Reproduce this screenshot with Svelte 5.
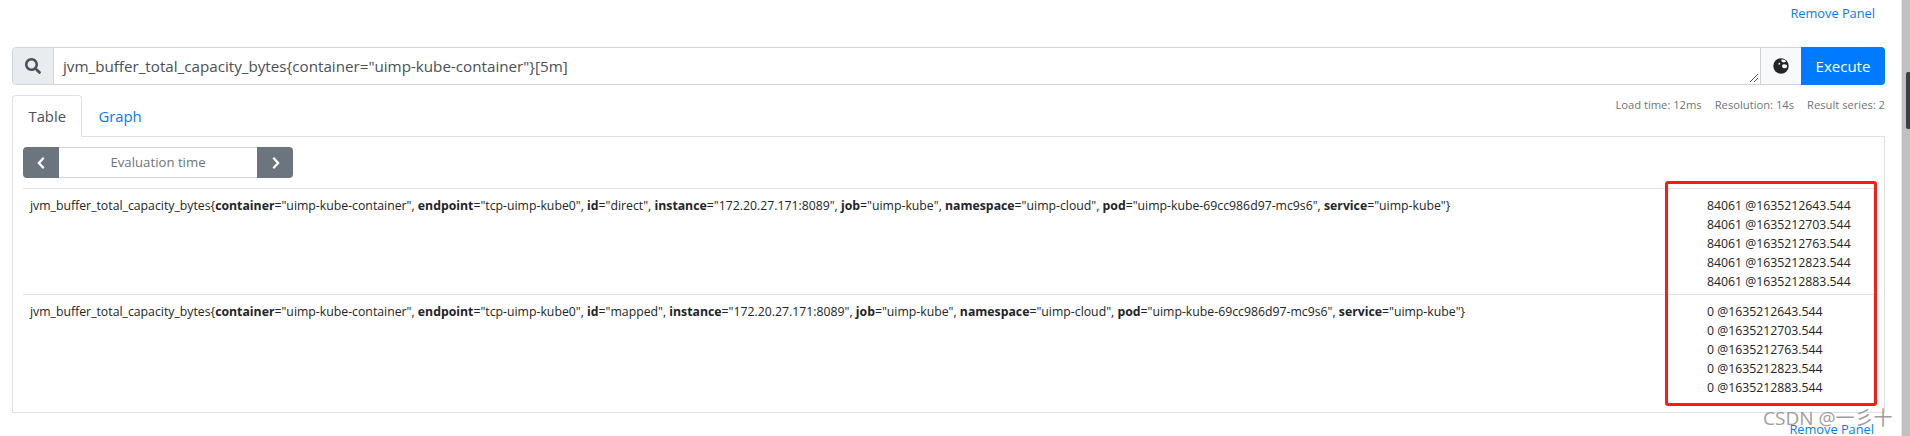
<script>
  const rows = [
    { id: 'direct', v: '84061' },
    { id: 'mapped', v: '0' }
  ];
  const stamps = ['1635212643.544', '1635212703.544', '1635212763.544', '1635212823.544', '1635212883.544'];
</script>

<div class="page">
  <main class="main">
    <div class="top-link"><a href="#r">Remove Panel</a></div>
    <div class="query">
      <div class="prepend">
        <svg viewBox="0 0 512 512" width="16" height="16"><path fill="#495057" d="M505 442.700L405.300 343c-4.500-4.500-10.600-7-17-7H372c27.600-35.300 44-79.700 44-128C416 93.100 322.900 0 208 0S0 93.100 0 208s93.100 208 208 208c48.300 0 92.700-16.400 128-44v16.300c0 6.400 2.500 12.500 7 17l99.700 99.700c9.400 9.400 24.600 9.400 33.900 0l28.300-28.300c9.400-9.400 9.400-24.600.1-34zM208 336c-70.700 0-128-57.200-128-128 0-70.700 57.200-128 128-128 70.700 0 128 57.200 128 128 0 70.700-57.200 128-128 128z"/></svg>
      </div>
      <div class="input">jvm_buffer_total_capacity_bytes{'{'}container="uimp-kube-container"{'}'}[5m]
        <svg class="grip" viewBox="0 0 10 10" width="10" height="10"><path d="M1 9L9 1M5 9L9 5" stroke="#555" stroke-width="1"/></svg>
      </div>
      <div class="globe">
        <svg viewBox="0 0 16 16" width="16" height="16"><circle cx="8" cy="8" r="7.700" fill="#212529"/><path fill="#f8f9fa" d="M8.500 1.600c1.500-.3 3 .2 4 1 .8.700.6 1.400-.3 1.400-.8 0-1.200.6-1.800.3-.7-.4-1.300-.3-1.700-.9-.3-.5-.7-1.500-.2-1.800zM6 5c.8-.4 1.500.2 1.100 1-.3.600-1 .9-1.600.6C5 6.300 5.400 5.300 6 5zM10 6.500c1-.5 2.500-.3 3.300.3.800.6 1.100 1.700.6 2.400-.7.800-2 1.300-3 1.100-1-.2-1.900-1.200-1.900-2.100 0-.6.400-1.400 1-1.700z"/></svg>
      </div>
      <button class="execute">Execute</button>
    </div>

    <div class="tabbar">
      <div class="tabs">
        <span class="tab active">Table</span>
        <a class="tab" href="#g">Graph</a>
      </div>
      <div class="stats">
        <span>Load time: 12ms</span><span>Resolution: 14s</span><span>Result series: 2</span>
      </div>
    </div>

    <section class="panel">
      <div class="evalbar">
        <button class="nav nav-l" aria-label="previous">
          <svg viewBox="0 0 10 16" width="9" height="14"><path d="M7.500 2L2 8l5.500 6" fill="none" stroke="#fff" stroke-width="2.600"/></svg>
        </button>
        <div class="evaltime">Evaluation time</div>
        <button class="nav nav-r" aria-label="next">
          <svg viewBox="0 0 10 16" width="9" height="14"><path d="M2.500 2L8 8l-5.500 6" fill="none" stroke="#fff" stroke-width="2.600"/></svg>
        </button>
      </div>
      <div class="table">
        {#each rows as r}
          <div class="row">
            <div class="metric">jvm_buffer_total_capacity_bytes{'{'}<b>container</b>="uimp-kube-container", <b>endpoint</b>="tcp-uimp-kube0", <b>id</b>="{r.id}", <b>instance</b>="172.20.27.171:8089", <b>job</b>="uimp-kube", <b>namespace</b>="uimp-cloud", <b>pod</b>="uimp-kube-69cc986d97-mc9s6", <b>service</b>="uimp-kube"{'}'}</div>
            <div class="values">
              {#each stamps as s}
                <div>{r.v} @{s}</div>
              {/each}
            </div>
          </div>
        {/each}
      </div>
    </section>
    <div class="bottom-link"><a href="#r2">Remove Panel</a></div>
    <div class="redbox"></div>
    <div class="mark">CSDN @一彡十</div>
  </main>
  <div class="scrollbar"><div class="thumb"></div></div>
</div>

<style>
  :global(body) { margin: 0; background: #fff; overflow: hidden; }
  .page {
    display: flex; height: 436px; overflow: hidden;
    font-family: "Open Sans", "Liberation Sans", sans-serif;
    color: #212529;
  }
  .main { position: relative; flex: 1; padding: 0 16px 0 12px; min-width: 0; }
  a { color: #007bff; text-decoration: none; }
  .scrollbar { width: 8px; background: #c1c1c1; border-left: 1px solid #e6e6e6; position: relative; }
  .thumb { position: absolute; left: 4px; top: 72px; width: 4px; height: 57px; background: #3d3f48; border-radius: 2px 0 0 2px; }
  .top-link { height: 47px; box-sizing: border-box; padding-top: 4px; text-align: right; padding-right: 10px; font-size: 12.800px; line-height: 19px; }
  .query { display: flex; height: 38px; box-sizing: border-box; border: 1px solid #ced4da; border-radius: 4px; }
  .prepend { width: 40px; background: #e9ecef; border-right: 1px solid #ced4da; display: flex; align-items: center; justify-content: center; border-radius: 4px 0 0 4px; }
  .input { flex: 1; position: relative; padding-left: 9px; line-height: 37px; color: #495057; font-size: 15.200px; }
  .grip { position: absolute; right: 1px; bottom: 1px; }
  .globe { width: 40px; background: #f8f9fa; border-left: 1px solid #ced4da; display: flex; align-items: center; justify-content: center; }
  .execute { width: 84px; margin: -1px -1px -1px 0; background: #007bff; color: #fff; border: 0; border-radius: 0 4px 4px 0; font: inherit; font-size: 15px; padding: 0; }
  .tabbar { display: flex; justify-content: space-between; margin-top: 10px; height: 41px; }
  .tabs { display: flex; position: relative; z-index: 1; }
  .tab { font-size: 14.800px; line-height: 42px; padding: 0 16px; height: 42px; box-sizing: border-box; }
  .tab.active { color: #495057; border: 1px solid #dee2e6; border-bottom-color: #fff; border-radius: 4px 4px 0 0; padding: 0 15.500px; background: #fff; line-height: 40px; }
  .stats { display: flex; gap: 13px; font-size: 11.200px; color: #6c757d; line-height: 17px; padding-top: 1px; }
  .panel { border: 1px solid #dee2e6; height: 277px; box-sizing: border-box; padding: 10px 10px 0; }
  .evalbar { display: flex; width: 270px; height: 31px; }
  .nav { width: 36px; background: #6c757d; border: 0; padding: 0; display: flex; align-items: center; justify-content: center; }
  .nav-l { border-radius: 4px 0 0 4px; }
  .nav-r { border-radius: 0 4px 4px 0; }
  .evaltime { flex: 1; text-align: center; font-size: 13.200px; line-height: 29px; color: #6c757d; border-top: 1px solid #ced4da; border-bottom: 1px solid #ced4da; }
  .table { margin-top: 10px; font-size: 12.280px; }
  .row { display: flex; justify-content: space-between; border-top: 1px solid #dee2e6; height: 106px; box-sizing: border-box; padding: 7px 0 0 7px; line-height: 19px; }
  .row + .row { height: 118px; }
  .values { width: 167px; flex: none; white-space: nowrap; }
  .metric { white-space: nowrap; }
  .bottom-link { position: absolute; right: 27px; top: 420px; font-size: 12.800px; line-height: 19px; }
  .redbox { position: absolute; left: 1665px; top: 181px; width: 212px; height: 225px; box-sizing: border-box; border: 3px solid #ff1a12; border-radius: 3px; }
  .mark { position: absolute; left: 1763px; top: 405px; font-size: 19px; line-height: 26px; color: #8e8e8e; white-space: nowrap; font-family: "Open Sans", "Noto Sans CJK SC", sans-serif; opacity: .85; }
</style>
